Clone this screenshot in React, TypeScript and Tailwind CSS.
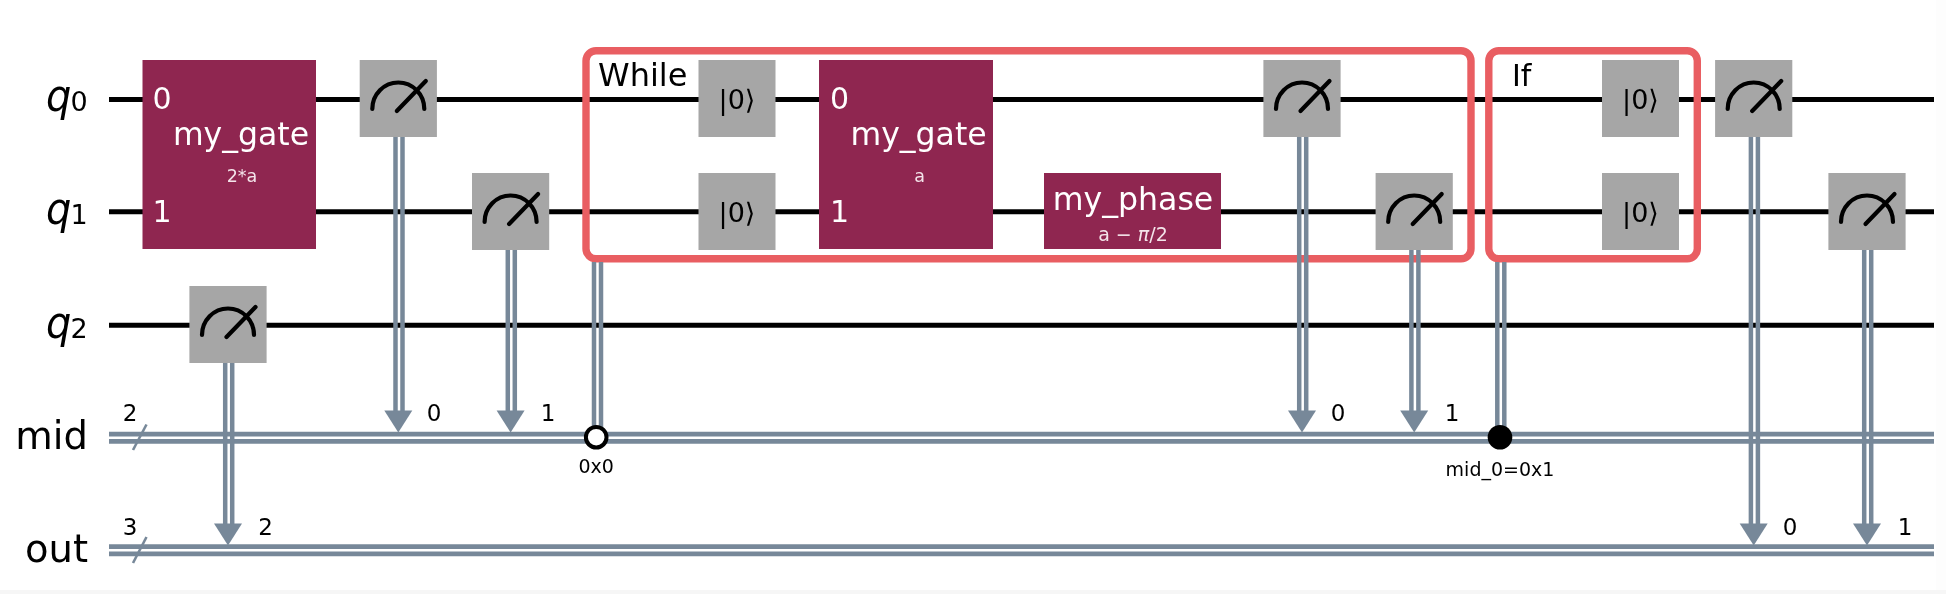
const WIRE = "#000000";
const CREG = "#778899";
const RED = "#e95e62";
const GATE = "#a6a6a6";
const CUSTOM = "#8f2650";

const qubitWires = [99.5, 211.8, 325.3];
const classicalWires = [437.7, 550.3];

// center x of each measure gate, top of the gate, and where its drop lands
const measures = [
  { x: 398.3, toY: 431.5, bit: "0", labelX: 434, top: 60 },
  { x: 510.6, toY: 431.5, bit: "1", labelX: 548, top: 173 },
  { x: 228, toY: 544.5, bit: "2", labelX: 265.6, top: 286 },
  { x: 1302, toY: 431.5, bit: "0", labelX: 1338, top: 60 },
  { x: 1414.2, toY: 431.5, bit: "1", labelX: 1452, top: 173 },
  { x: 1753.7, toY: 544.5, bit: "0", labelX: 1790, top: 60 },
  { x: 1867, toY: 544.5, bit: "1", labelX: 1905, top: 173 },
];

const resets = [
  { x: 737, top: 60 },
  { x: 737, top: 173 },
  { x: 1640.5, top: 60 },
  { x: 1640.5, top: 173 },
];

const DoubleV = ({ x, y1, y2 }: { x: number; y1: number; y2: number }) => (
  <g stroke={CREG} strokeWidth={4.5}>
    <line x1={x - 3.5} x2={x - 3.5} y1={y1} y2={y2} />
    <line x1={x + 3.5} x2={x + 3.5} y1={y1} y2={y2} />
  </g>
);

const Meter = ({ x, top }: { x: number; top: number }) => {
  const cy = top + 39;
  return (
    <g>
      <rect x={x - 38.6} y={top} width={77.2} height={77} fill={GATE} />
      <g fill="none" stroke="#000" strokeWidth={4.2} strokeLinecap="round">
        <path d={`M${x - 26} ${cy + 10}A26 26.5 0 0 1 ${x + 26} ${cy + 10}`} />
        <line x1={x - 1.5} y1={cy + 12} x2={x + 27.5} y2={cy - 18} />
      </g>
    </g>
  );
};

const Reset = ({ x, top }: { x: number; top: number }) => (
  <g>
    <rect x={x - 38.5} y={top} width={77} height={77} fill={GATE} />
    <text x={x} y={top + 48.5} textAnchor="middle" fontSize={27} fill="#000">
      |0⟩
    </text>
  </g>
);

const CustomGate = ({
  x,
  width,
  labelX,
  portX,
  param,
}: {
  x: number;
  width: number;
  labelX: number;
  portX: number;
  param: string;
}) => (
  <g>
    <rect x={x} y={60} width={width} height={189} fill={CUSTOM} />
    <g fill="#fff" textAnchor="middle">
      <text x={portX} y={108.5} fontSize={30}>0</text>
      <text x={portX} y={221.5} fontSize={30}>1</text>
      <text x={labelX} y={145} fontSize={31.5}>my_gate</text>
      <text x={labelX + 1} y={181.5} fontSize={17.5} fill="#f4e4ea">{param}</text>
    </g>
  </g>
);

// the q is a touch taller than it is wide in the picture
const QubitLabel = ({ y, sub }: { y: number; sub: string }) => (
  <g fill="#000">
    <text transform={`translate(46 ${y}) scale(1 1.1)`} fontSize={40} fontStyle="italic">q</text>
    <text x={70.5} y={y} fontSize={27}>{sub}</text>
  </g>
);

const Arrow = ({ x, tipY }: { x: number; tipY: number }) => (
  <polygon points={`${x - 14},${tipY - 21} ${x + 14},${tipY - 21} ${x},${tipY + 1}`} fill={CREG} />
);

export default function App() {
  return (
    <div className="h-[594px] w-[1946px] overflow-hidden bg-[#f6f6f6]">
      <div className="h-[590px] w-[1946px] bg-[#fdfdfd]">
        <svg
          width={1936}
          height={590}
          viewBox="0 0 1936 590"
          className="block bg-white blur-[0.6px]"
          style={{ fontFamily: '"DejaVu Sans", sans-serif' }}
        >
          {/* wires */}
          {qubitWires.map((y) => (
            <line key={y} x1={109} x2={1934} y1={y} y2={y} stroke={WIRE} strokeWidth={5} />
          ))}
          {classicalWires.map((y) => (
            <g key={y} stroke={CREG} strokeWidth={4.7}>
              <line x1={109} x2={1934} y1={y - 3.6} y2={y - 3.6} />
              <line x1={109} x2={1934} y1={y + 3.6} y2={y + 3.6} />
            </g>
          ))}
          <g stroke={CREG} strokeWidth={2.6}>
            <line x1={133} y1={450} x2={146.5} y2={424.5} />
            <line x1={133} y1={563} x2={146.5} y2={537} />
          </g>

          {/* control flow boxes, the drops run over them */}
          <rect x={586} y={50.7} width={885} height={208} rx={10} fill="none" stroke={RED} strokeWidth={7.4} />
          <rect x={1488.8} y={50.7} width={208.5} height={208} rx={10} fill="none" stroke={RED} strokeWidth={7.4} />
          <text x={598} y={86} fontSize={32} fill="#000">While</text>
          <text x={1512} y={86} fontSize={30} fill="#000">If</text>

          {/* measure / condition drops */}
          {measures.map((m) => (
            <g key={m.labelX}>
              <DoubleV x={m.x + 0.7} y1={m.top + 77} y2={m.toY - 18} />
              <Arrow x={m.x} tipY={m.toY} />
              <text x={m.labelX} y={m.toY < 500 ? 421 : 534.5} textAnchor="middle" fontSize={23} fill="#000">
                {m.bit}
              </text>
            </g>
          ))}
          <DoubleV x={597.5} y1={262} y2={430} />
          <DoubleV x={1500.8} y1={262} y2={430} />

          {/* register labels */}
          <QubitLabel y={111} sub="0" />
          <QubitLabel y={223.5} sub="1" />
          <QubitLabel y={338} sub="2" />
          <text x={88} y={449} textAnchor="end" fontSize={38.5} fill="#000">mid</text>
          <text x={88} y={562} textAnchor="end" fontSize={38.5} fill="#000">out</text>
          <text x={130} y={421} textAnchor="middle" fontSize={23} fill="#000">2</text>
          <text x={130} y={534.5} textAnchor="middle" fontSize={23} fill="#000">3</text>

          {/* gates */}
          <CustomGate x={142.5} width={173.5} labelX={241} portX={162} param="2*a" />
          <CustomGate x={819} width={174} labelX={918.6} portX={839.5} param="a" />
          <rect x={1044} y={173} width={177} height={76} fill={CUSTOM} />
          <g fill="#fff" textAnchor="middle">
            <text x={1133} y={210} fontSize={31.6}>my_phase</text>
            <text x={1133} y={240.5} fontSize={19} fill="#f4e4ea">
              a − <tspan fontStyle="italic">π</tspan>/2
            </text>
          </g>
          {measures.map((m) => (
            <Meter key={m.labelX} x={m.x} top={m.top} />
          ))}
          {resets.map((r) => (
            <Reset key={`${r.x}-${r.top}`} x={r.x} top={r.top} />
          ))}

          {/* controls */}
          <circle cx={596.2} cy={437.2} r={10.3} fill="#fff" stroke="#000" strokeWidth={4} />
          <circle cx={1500} cy={437.2} r={12.3} fill="#000" />
          <text x={596.2} y={473} textAnchor="middle" fontSize={19} fill="#000">0x0</text>
          <text x={1500} y={475.5} textAnchor="middle" fontSize={19} fill="#000">mid_0=0x1</text>
        </svg>
      </div>
    </div>
  );
}
